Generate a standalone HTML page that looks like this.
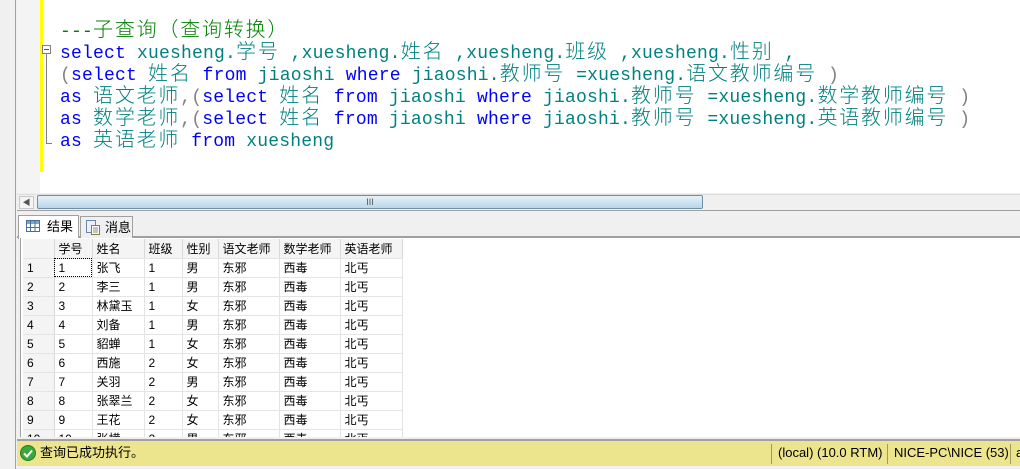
<!DOCTYPE html>
<html><head><meta charset="utf-8"><style>
*{margin:0;padding:0;box-sizing:border-box}
body{width:1020px;height:469px;background:#f0f0f0;position:relative;overflow:hidden;font-family:"Liberation Sans","Noto Sans CJK SC",sans-serif}
.left{position:absolute;left:0;top:0;width:16px;height:469px;background:#f0f0f0;border-right:1px solid #a0a0a0}
.editor{position:absolute;left:17px;top:0;width:1003px;height:193px;background:#fff}
.gut{position:absolute;left:17px;top:0;width:23px;height:193px;background:#f4f4f4}
.ybar{position:absolute;left:40px;top:0;width:3px;height:172px;background:#ffff00}
.code{position:absolute;left:60px;top:21px;font-family:"Liberation Mono","Noto Sans CJK SC",monospace;font-size:18px;letter-spacing:0.2px;color:#008080}
.code div{height:22px;line-height:22px;white-space:pre}
.c{font-family:"Noto Sans CJK SC",sans-serif;font-size:20px;letter-spacing:1.8px;font-weight:300;line-height:0;vertical-align:baseline}
.k{color:#0000ff}.g{color:#808080}.cm{color:#008000}
.fold{position:absolute;left:42px;top:45px;width:9px;height:9px;border:1px solid #808080;background:#fff}
.fold:after{content:"";position:absolute;left:1px;top:3px;width:5px;height:1px;background:#555}
.fl{position:absolute;left:46px;top:54px;width:1px;height:90px;background:#808080}
.fl2{position:absolute;left:46px;top:143px;width:6px;height:1px;background:#808080}
.sb{position:absolute;left:17px;top:194px;width:1003px;height:17px;background:#f0f0f0;border-top:1px solid #ddd;border-bottom:1px solid #a0a0a0}
.sbb{position:absolute;left:19px;top:196px;width:15px;height:13px;border:1px solid #c8c8c8;background:#f4f4f4;font-size:8px;color:#555;text-align:center;line-height:11px}
.thumb{position:absolute;left:37px;top:195px;width:666px;height:14px;border:1px solid #6d8fa8;border-radius:2px;background:linear-gradient(#e6f2f9,#b9d6e8);font-size:9px;text-align:center;color:#555;line-height:12px}
.tabs{position:absolute;left:17px;top:212px;width:1003px;height:26px;background:#f0f0f0;border-bottom:2px solid #a0a0a0}
.tab{position:absolute;top:216px;height:22px;font-size:13px;line-height:22px;border:1px solid #a0a0a0;border-bottom:none;background:#f0f0f0}
.grid{position:absolute;left:20px;top:238px;width:1000px;height:199px;background:#fff;border-left:1px solid #a0a0a0;overflow:hidden}
table{border-collapse:collapse;font-size:12px;position:absolute;left:2px;top:1px}
td{height:19px;border-right:1px solid #e4e4e4;border-bottom:1px solid #e4e4e4;padding-left:4px;color:#000;white-space:nowrap}
tr.h td{background:#f4f4f4;border-right:1px solid #d8d8d8}
td.r{background:#f4f4f4;border-right:1px solid #d8d8d8}
.status{position:absolute;left:17px;top:439px;width:1003px;height:27px;background:#ede48e;border-top:2px solid #a0a0a0;font-size:13px;line-height:24px}
.sep{position:absolute;top:3px;width:1px;height:20px;background:#a09a60}
</style></head><body>
<div class="left"></div>
<div class="editor"></div>
<div class="gut"></div>
<div class="ybar"></div>
<div class="fold"></div><div class="fl"></div><div class="fl2"></div>
<div class="code"><div><span class="cm">---<span class="c">子查询（查询转换）</span></span></div>
<div><span class="k">select</span> xuesheng.<span class="c">学号</span> ,xuesheng.<span class="c">姓名</span> ,xuesheng.<span class="c">班级</span> ,xuesheng.<span class="c">性别</span> ,</div>
<div><span class="g">(</span><span class="k">select</span> <span class="c">姓名</span> <span class="k">from</span> jiaoshi <span class="k">where</span> jiaoshi.<span class="c">教师号</span> =xuesheng.<span class="c">语文教师编号</span> <span class="g">)</span></div>
<div><span class="k">as</span> <span class="c">语文老师</span><span class="g">,(</span><span class="k">select</span> <span class="c">姓名</span> <span class="k">from</span> jiaoshi <span class="k">where</span> jiaoshi.<span class="c">教师号</span> =xuesheng.<span class="c">数学教师编号</span> <span class="g">)</span></div>
<div><span class="k">as</span> <span class="c">数学老师</span><span class="g">,(</span><span class="k">select</span> <span class="c">姓名</span> <span class="k">from</span> jiaoshi <span class="k">where</span> jiaoshi.<span class="c">教师号</span> =xuesheng.<span class="c">英语教师编号</span> <span class="g">)</span></div>
<div><span class="k">as</span> <span class="c">英语老师</span> <span class="k">from</span> xuesheng</div></div>
<div class="sb"></div>
<div class="sbb">◀</div>
<div class="thumb">III</div>
<div class="tabs"></div>
<div class="tab" style="left:18px;width:61px;background:#fff;top:215px;height:24px;padding-left:28px">结果
<svg style="position:absolute;left:7px;top:4px" width="14" height="12"><rect x="0.5" y="0.5" width="13" height="11" fill="#fff" stroke="#4a6f9c"/><rect x="1" y="1" width="12" height="3" fill="#7fa4d0"/><path d="M1 7.5H13M4.5 1V11M9 1V11" stroke="#4a6f9c"/></svg></div>
<div class="tab" style="left:80px;width:53px;padding-left:24px">消息
<svg style="position:absolute;left:5px;top:3px" width="14" height="15"><rect x="0.5" y="0.5" width="9" height="12" fill="#eef" stroke="#6b86a8"/><rect x="5.5" y="5.5" width="8" height="9" fill="#fff" stroke="#8a7a40"/><path d="M7 8h5M7 10h5M7 12h5" stroke="#888"/></svg></div>
<div class="grid">
<table>
<colgroup><col style="width:31px"><col style="width:38px"><col style="width:52px"><col style="width:38px"><col style="width:36px"><col style="width:61px"><col style="width:61px"><col style="width:62px"></colgroup>
<tr class="h"><td></td><td>学号</td><td>姓名</td><td>班级</td><td>性别</td><td>语文老师</td><td>数学老师</td><td>英语老师</td></tr>
<tr><td class="r">1</td><td style="outline:1px dotted #000;outline-offset:-1px">1</td><td>张飞</td><td>1</td><td>男</td><td>东邪</td><td>西毒</td><td>北丐</td></tr>
<tr><td class="r">2</td><td>2</td><td>李三</td><td>1</td><td>男</td><td>东邪</td><td>西毒</td><td>北丐</td></tr>
<tr><td class="r">3</td><td>3</td><td>林黛玉</td><td>1</td><td>女</td><td>东邪</td><td>西毒</td><td>北丐</td></tr>
<tr><td class="r">4</td><td>4</td><td>刘备</td><td>1</td><td>男</td><td>东邪</td><td>西毒</td><td>北丐</td></tr>
<tr><td class="r">5</td><td>5</td><td>貂蝉</td><td>1</td><td>女</td><td>东邪</td><td>西毒</td><td>北丐</td></tr>
<tr><td class="r">6</td><td>6</td><td>西施</td><td>2</td><td>女</td><td>东邪</td><td>西毒</td><td>北丐</td></tr>
<tr><td class="r">7</td><td>7</td><td>关羽</td><td>2</td><td>男</td><td>东邪</td><td>西毒</td><td>北丐</td></tr>
<tr><td class="r">8</td><td>8</td><td>张翠兰</td><td>2</td><td>女</td><td>东邪</td><td>西毒</td><td>北丐</td></tr>
<tr><td class="r">9</td><td>9</td><td>王花</td><td>2</td><td>女</td><td>东邪</td><td>西毒</td><td>北丐</td></tr>
<tr><td class="r">10</td><td>10</td><td>张横</td><td>2</td><td>男</td><td>东邪</td><td>西毒</td><td>北丐</td></tr>
</table>
</div>
<div class="status">
<svg style="position:absolute;left:3px;top:4px" width="16" height="16"><circle cx="8" cy="8" r="7.5" fill="#3aa83a" stroke="#2a7a2a"/><path d="M4 8.5l3 3 5-6" stroke="#fff" stroke-width="2" fill="none"/></svg>
<span style="position:absolute;left:23px">查询已成功执行。</span>
<div class="sep" style="left:754px"></div>
<span style="position:absolute;left:761px">(local) (10.0 RTM)</span>
<div class="sep" style="left:870px"></div>
<span style="position:absolute;left:877px">NICE-PC\NICE (53)</span>
<div class="sep" style="left:993px"></div>
<span style="position:absolute;left:999px">a</span>
</div>
</body></html>
